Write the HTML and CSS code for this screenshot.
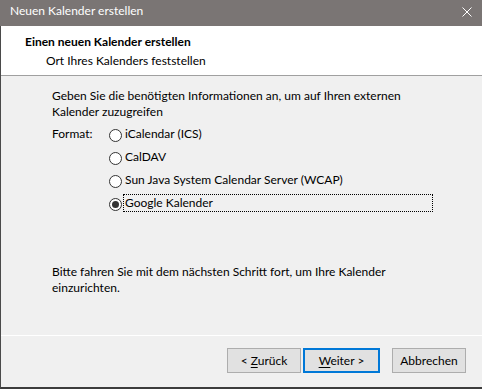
FILE: index.html
```html
<!DOCTYPE html>
<html lang="de">
<head>
    <meta charset="UTF-8">
    <title>Neuen Kalender erstellen</title>
<link rel="stylesheet" href="styles.css">
</head>
<body>
    <div class="window">
        <div class="titlebar">
            <span class="title">Neuen Kalender erstellen</span>
            <svg class="close" width="10" height="10" viewBox="0 0 10 10">
                <path d="M0.5 0.5 L9.5 9.5 M9.5 0.5 L0.5 9.5" stroke="#fff" stroke-width="1" fill="none"/>
            </svg>
        </div>
        <div class="frame">
            <div class="header">
                <div class="header-title">Einen neuen Kalender erstellen</div>
                <div class="header-sub">Ort Ihres Kalenders feststellen</div>
            </div>
            <div class="content">
                <p class="text">Geben Sie die benötigten Informationen an, um auf Ihren externen Kalender zuzugreifen</p>
                <div class="format-row">
                    <span class="format-label">Format:</span>
                    <div class="options">
                        <div class="option"><span class="radio"></span><span class="option-label">iCalendar (ICS)</span></div>
                        <div class="option"><span class="radio"></span><span class="option-label">CalDAV</span></div>
                        <div class="option"><span class="radio"></span><span class="option-label">Sun Java System Calendar Server (WCAP)</span></div>
                        <div class="option"><span class="radio checked"></span><span class="option-label focused">Google Kalender</span></div>
                    </div>
                </div>
                <p class="text outro">Bitte fahren Sie mit dem nächsten Schritt fort, um Ihre Kalender einzurichten.</p>
            </div>
            <div class="footer">
                <button class="btn">&lt; <u>Z</u>urück</button>
                <button class="btn default"><u>W</u>eiter &gt;</button>
                <button class="btn cancel">Abbrechen</button>
            </div>
        </div>
    </div>
</body>
</html>
```

FILE: styles.css
```css
body {
    margin: 0;
    font-family: Lato, "Noto Sans", sans-serif;
    font-size: 12px;
    line-height: 16px;
    color: #000;
    background: #f0f0f0;
}

.window {
    width: 482px;
    height: 389px;
    display: flex;
    flex-direction: column;
    overflow: hidden;
}

/* Title bar */
.titlebar {
    height: 26px;
    box-sizing: border-box;
    padding: 3px 0 0 10px;
    background-color: #7a7574;
    color: #fff;
    display: flex;
    align-items: flex-start;
    justify-content: space-between;
}

.close {
    margin: 4px 10px 0 0;
}

.frame {
    flex: 1;
    display: flex;
    flex-direction: column;
    border-left: 1px solid #4a4a4a;
    border-bottom: 2px solid #3c3c3c;
}

/* White header with wizard step */
.header {
    height: 50px;
    box-sizing: border-box;
    padding: 8px 0 0 24px;
    background: #fff;
    border-bottom: 1px solid #a0a0a0;
}

.header-title {
    font-weight: bold;
}

.header-sub {
    margin-top: 3px;
    padding-left: 21px;
}

/* Main area */
.content {
    height: 260px;
    box-sizing: border-box;
    padding: 12px 0 0 51px;
    border-bottom: 1px solid #fff;
}

.text {
    margin: 0;
    width: 390px;
}

.format-row {
    display: flex;
    align-items: flex-start;
    margin-top: 5px;
}

.format-label {
    width: 57px;
    padding-top: 1px;
}

.options {
    display: flex;
    flex-direction: column;
    gap: 5px;
}

.option {
    display: flex;
    align-items: center;
}

.radio {
    width: 13px;
    height: 13px;
    box-sizing: border-box;
    border: 1px solid #333;
    border-radius: 50%;
    background: #fff;
    margin-top: 2px;
    margin-right: 1px;
    display: flex;
    align-items: center;
    justify-content: center;
}

.radio.checked::after {
    content: '';
    width: 7px;
    height: 7px;
    border-radius: 50%;
    background: #333;
}

.option-label {
    padding: 0 1px;
    border: 1px dotted transparent;
}

.option-label.focused {
    border-color: #000;
    width: 306px;
}

.outro {
    margin-top: 52px;
}

/* Buttons */
.footer {
    flex: 1;
    display: flex;
    justify-content: flex-end;
    align-items: flex-start;
    padding: 12px 16px 0 0;
}

.btn {
    width: 74px;
    height: 25px;
    font-family: inherit;
    font-size: 12px;
    color: #000;
    background: #e1e1e1;
    border: 1px solid #adadad;
    padding: 0;
    margin-left: 2px;
}

.btn.default {
    border: 2px solid #0078d7;
    width: 77px;
}

.btn.cancel {
    margin-left: 12px;
}

.btn u {
    text-decoration-thickness: 1px;
    text-underline-offset: 2px;
}
```
